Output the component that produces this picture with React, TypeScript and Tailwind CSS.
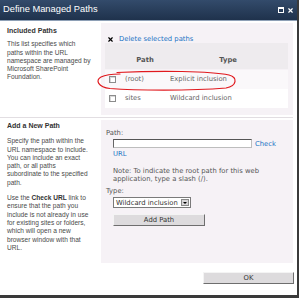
import { X } from "lucide-react";

const desc = "font-['Liberation_Sans',Arial,sans-serif] text-[6.6px] leading-[8.3px] text-[#4a4a4a] whitespace-nowrap";
const ctrl = "font-['DejaVu_Sans',Verdana,sans-serif] text-[6.8px] leading-[8.3px] whitespace-nowrap";

const rows = [
  { path: "(root)", type: "Explicit inclusion", bg: "bg-[#faf8fa]" },
  { path: "sites", type: "Wildcard inclusion", bg: "bg-white" },
];

function Checkbox() {
  return <span className="block w-[7px] h-[7px] border border-[#8c8c8c] bg-white shadow-[inset_1px_1px_0_#d8d8d8]" />;
}

export default function App() {
  return (
    <div className="w-[302px] h-[301px] bg-white overflow-hidden">
      <div className="relative w-[299px] h-[298px] flex flex-col border-r-2 border-b-[3px] border-[#3a3a3a]">
        {/* Title bar */}
        <div className="h-[21px] flex items-center justify-between pl-[3px] pr-[3px] bg-linear-to-b from-[#334b6b] to-[#1f324c] border-b border-[#8ea0b6]">
          <span className="font-['Liberation_Sans',Arial,sans-serif] text-[9.3px] text-white">Define Managed Paths</span>
          <div className="flex items-center gap-[3px]">
            <span className="block w-[6px] h-[6px] border border-white border-t-2" />
            <X className="w-[7px] h-[7px] text-white" strokeWidth={4} />
          </div>
        </div>

        <div className="flex-1 flex flex-col bg-white pt-[2px] pr-[4px]">
          {/* Included paths */}
          <div className="h-[92px] flex">
            <div className="w-[101px] pl-[7px] pt-[4px]">
              <div className="font-['Liberation_Sans',Arial,sans-serif] text-[7px] leading-[8.3px] font-bold text-[#333]">Included Paths</div>
              <p className={`${desc} mt-[5px]`}>
                This list specifies which<br />
                paths within the URL<br />
                namespace are managed by<br />
                Microsoft SharePoint<br />
                Foundation.
              </p>
            </div>
            <div className="flex-1 bg-[#f6f2f6] pl-[4px] pr-[5px] pt-[12px]">
              <div className="flex items-center gap-[5px] pl-[2px] h-[8px]">
                <X className="w-[7px] h-[7px] text-black" strokeWidth={4} />
                <span className={`${ctrl} text-[#1a72c4]`}>Delete selected paths</span>
              </div>
              <div className="mt-[0px]">
                <div className={`${ctrl} grid grid-cols-[17px_46px_1fr] h-[26px] items-end pb-[5px] bg-[#eeebee] font-bold text-[#555]`}>
                  <span />
                  <span className="text-center">Path</span>
                  <span className="text-center">Type</span>
                </div>
                <div className="h-px" />
                {rows.map((r) => (
                  <div key={r.path} className={`${ctrl} grid grid-cols-[17px_46px_1fr] h-[19px] items-center text-[#666] ${r.bg}`}>
                    <span className="pl-[4px]"><Checkbox /></span>
                    <span className="pl-[3px]">{r.path}</span>
                    <span className="pl-[2px]">{r.type}</span>
                  </div>
                ))}
              </div>
            </div>
          </div>

          <div className="my-[2px] h-px bg-[#e2dee2]" />

          {/* Add a new path */}
          <div className="h-[143px] flex">
            <div className="w-[101px] pl-[7px] pt-[2px]">
              <div className="font-['Liberation_Sans',Arial,sans-serif] text-[7px] leading-[8.3px] font-bold text-[#333]">Add a New Path</div>
              <p className={`${desc} mt-[7px]`}>
                Specify the path within the<br />
                URL namespace to include.<br />
                You can include an exact<br />
                path, or all paths<br />
                subordinate to the specified<br />
                path.
              </p>
              <p className={`${desc} mt-[7px]`}>
                Use the <b className="text-[#333]">Check URL</b> link to<br />
                ensure that the path you<br />
                include is not already in use<br />
                for existing sites or folders,<br />
                which will open a new<br />
                browser window with that<br />
                URL.
              </p>
            </div>
            <div className={`${ctrl} flex-1 bg-[#f6f2f6] pl-[5px] pt-[9px] text-[#555]`}>
              <div>Path:</div>
              <div className="flex items-center gap-[3px] ml-[7px] mt-[2px]">
                <span className="block w-[139px] h-[9px] bg-white border border-[#bdbdbd] border-t-[#555] border-l-[#666]" />
                <span className="text-[#1a72c4]">Check</span>
              </div>
              <div className="ml-[7px] mt-[2px] text-[#1a72c4]">URL</div>
              <div className="ml-[7px] mt-[8px]">
                Note: To indicate the root path for this web<br />
                application, type a slash (/).
              </div>
              <div className="mt-[4px]">Type:</div>
              <div className="ml-[7px] mt-[2px] w-[78px] h-[11px] flex items-center justify-between bg-white border border-[#7a7a7a] pl-[2px] pr-px text-[#333]">
                <span>Wildcard inclusion</span>
                <span className="w-[8px] h-[7px] bg-[#d8d6d8] border border-[#888] flex items-center justify-center">
                  <span className="border-l-[2px] border-r-[2px] border-t-[2px] border-l-transparent border-r-transparent border-t-black" />
                </span>
              </div>
              <button className="block ml-[7px] mt-[6px] w-[92px] h-[12px] bg-[#dddbdd] border border-[#f4f4f4] border-r-[#6e6e6e] border-b-[#6e6e6e] text-[#333] leading-[10px]">
                Add Path
              </button>
            </div>
          </div>

          {/* Footer */}
          <div className="flex justify-end pt-[9px] pr-[-1px]">
            <button className={`${ctrl} w-[91px] h-[12px] bg-[#dddbdd] border border-[#f4f4f4] border-r-[#6e6e6e] border-b-[#6e6e6e] text-[#333] leading-[10px] mr-[-1px]`}>
              OK
            </button>
          </div>
        </div>

        {/* hand-drawn red annotation */}
        <svg className="absolute left-0 top-0 pointer-events-none" width="302" height="301" viewBox="0 0 302 301" fill="none">
          <path
            d="M117 72.5 C 160 70.5, 210 71, 229 75 C 238 77.5, 237 86, 226 88 C 190 91, 135 90.5, 110 88.5 C 98 87, 95 80, 101 77 C 106 74.5, 112 74, 120 74"
            stroke="#e0191e"
            strokeWidth="1.2"
            strokeLinecap="round"
          />
        </svg>
      </div>
    </div>
  );
}
